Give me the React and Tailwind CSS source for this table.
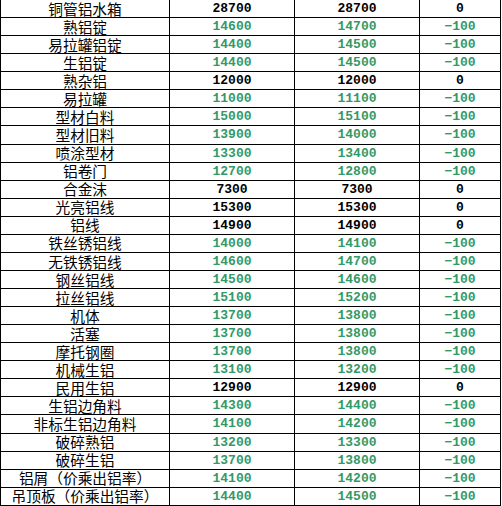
import React from "react";

const rows = [
  ["铜管铝水箱", "28700", "28700", "0"],
  ["熟铝锭", "14600", "14700", "-100"],
  ["易拉罐铝锭", "14400", "14500", "-100"],
  ["生铝锭", "14400", "14500", "-100"],
  ["熟杂铝", "12000", "12000", "0"],
  ["易拉罐", "11000", "11100", "-100"],
  ["型材白料", "15000", "15100", "-100"],
  ["型材旧料", "13900", "14000", "-100"],
  ["喷涂型材", "13300", "13400", "-100"],
  ["铝卷门", "12700", "12800", "-100"],
  ["合金沫", "7300", "7300", "0"],
  ["光亮铝线", "15300", "15300", "0"],
  ["铝线", "14900", "14900", "0"],
  ["铁丝锈铝线", "14000", "14100", "-100"],
  ["无铁锈铝线", "14600", "14700", "-100"],
  ["钢丝铝线", "14500", "14600", "-100"],
  ["拉丝铝线", "15100", "15200", "-100"],
  ["机体", "13700", "13800", "-100"],
  ["活塞", "13700", "13800", "-100"],
  ["摩托钢圈", "13700", "13800", "-100"],
  ["机械生铝", "13100", "13200", "-100"],
  ["民用生铝", "12900", "12900", "0"],
  ["生铝边角料", "14300", "14400", "-100"],
  ["非标生铝边角料", "14100", "14200", "-100"],
  ["破碎熟铝", "13200", "13300", "-100"],
  ["破碎生铝", "13700", "13800", "-100"],
  ["铝屑（价乘出铝率）", "14100", "14200", "-100"],
  ["吊顶板（价乘出铝率）", "14400", "14500", "-100"],
];

const numFont = { fontFamily: '"Liberation Mono", monospace' };

export default function App() {
  return (
    <div className="w-[502px] h-[506px] overflow-hidden bg-white">
      <div className="grid grid-cols-[169px_125px_125px_81px] auto-rows-[18.07px] border-l border-black w-[501px]">
        {rows.map(([name, low, high, diff]) => {
          const down = diff !== "0";
          const color = down ? "text-[#339966]" : "text-black";
          return (
            <React.Fragment key={name}>
              <div className="flex items-center justify-center border-r border-b border-black pt-px text-[14.7px] leading-none text-black font-['Noto_Sans_CJK_SC',sans-serif] whitespace-nowrap">
                {name}
              </div>
              <div
                className={`flex items-center justify-center border-r border-b border-black text-[13px] font-bold leading-none ${color}`}
                style={numFont}
              >
                {low}
              </div>
              <div
                className={`flex items-center justify-center border-r border-b border-black text-[13px] font-bold leading-none ${color}`}
                style={numFont}
              >
                {high}
              </div>
              <div
                className={`flex items-center justify-center border-r border-b border-black text-[13px] font-bold leading-none ${color}`}
                style={numFont}
              >
                {down ? "\u2212100" : "0"}
              </div>
            </React.Fragment>
          );
        })}
      </div>
    </div>
  );
}
